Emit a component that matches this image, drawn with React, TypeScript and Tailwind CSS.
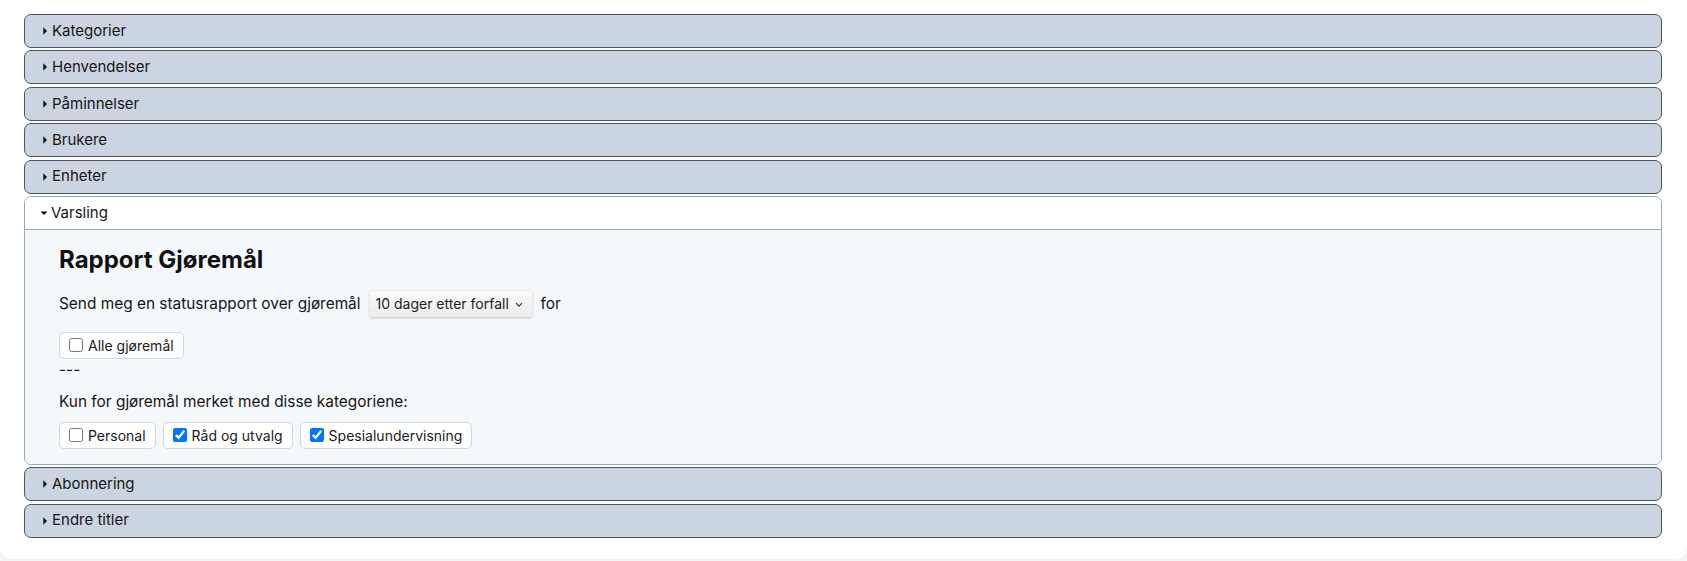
import React from "react";

const Caret = ({ open }: { open?: boolean }) =>
  open ? (
    <svg width="8" height="8" viewBox="0 0 8 8" className="shrink-0">
      <path d="M0.5 2.5 L7.5 2.5 L4 6 Z" fill="#111" />
    </svg>
  ) : (
    <svg width="8" height="8" viewBox="0 0 8 8" className="shrink-0">
      <path d="M2.3 0.3 L6 4 L2.3 7.7 Z" fill="#111" />
    </svg>
  );

const Closed = ({ label }: { label: string }) => (
  <div className="h-[34px] rounded-[7px] border border-[#4b5563] bg-[#cbd5e1] flex items-center pl-[16px] gap-[3px] text-[15px] text-[#151515]">
    <Caret />
    <span>{label}</span>
  </div>
);

const Chip = ({ label, checked }: { label: string; checked?: boolean }) => (
  <label className="h-[27px] flex items-center gap-[5px] px-[9px] rounded-[5px] border border-[#d4d8de] bg-white text-[14px] text-[#1b1b1b] whitespace-nowrap">
    <input type="checkbox" defaultChecked={checked} className="m-0 w-[14px] h-[14px]" />
    <span>{label}</span>
  </label>
);

export default function App() {
  return (
    <div className="min-h-screen bg-[#f4f4f5]" style={{ fontFamily: "Inter, 'Noto Sans', sans-serif" }}>
      <div className="bg-white rounded-b-[12px] pt-[14px] pb-[21px] pl-[24px] pr-[25px]">
        <div className="flex flex-col gap-[2.4px]">
          <Closed label="Kategorier" />
          <Closed label="Henvendelser" />
          <Closed label="Påminnelser" />
          <Closed label="Brukere" />
          <Closed label="Enheter" />
          <div className="rounded-[7px] border border-[#9aa8bb] overflow-hidden">
            <div className="h-[33px] bg-white flex items-center pl-[15px] gap-[3px] text-[15px] text-[#151515] border-b border-[#9aa8bb]">
              <Caret open />
              <span>Varsling</span>
            </div>
            <div className="bg-[#f5f8fb] pl-[34px] pt-[16px] pb-[15px] text-[#151515]">
              <h2 className="text-[24px] leading-[28px] font-bold text-[#111]">Rapport Gjøremål</h2>
              <div className="mt-[17px] h-[26px] flex items-center text-[15.4px]">
                <span>Send meg en statusrapport over gjøremål</span>
                <div className="relative ml-[9px] mr-[9px]">
                  <select
                    defaultValue="10"
                    className="appearance-none h-[26px] w-[162px] pl-[6px] pr-[20px] text-[14px] text-[#1b1b1b] rounded-[2px] bg-gradient-to-b from-[#fafafa] to-[#ececec] shadow-[0_1px_3px_rgba(0,0,0,0.22)] outline-none"
                  >
                    <option value="10">10 dager etter forfall</option>
                  </select>
                  <svg width="8" height="6" viewBox="0 0 8 6" className="absolute right-[9px] top-[11px] pointer-events-none">
                    <path d="M1 1.2 L4 4.2 L7 1.2" stroke="#333" strokeWidth="1.2" fill="none" />
                  </svg>
                </div>
                <span>for</span>
              </div>
              <div className="mt-[15px] flex">
                <Chip label="Alle gjøremål" />
              </div>
              <div className="text-[15.4px] leading-[20px] mt-[1px]">---</div>
              <div className="text-[15.4px] leading-[24px] mt-[10px]">Kun for gjøremål merket med disse kategoriene:</div>
              <div className="mt-[8px] flex gap-[7px]">
                <Chip label="Personal" />
                <Chip label="Råd og utvalg" checked />
                <Chip label="Spesialundervisning" checked />
              </div>
            </div>
          </div>
          <Closed label="Abonnering" />
          <Closed label="Endre titler" />
        </div>
      </div>
    </div>
  );
}
